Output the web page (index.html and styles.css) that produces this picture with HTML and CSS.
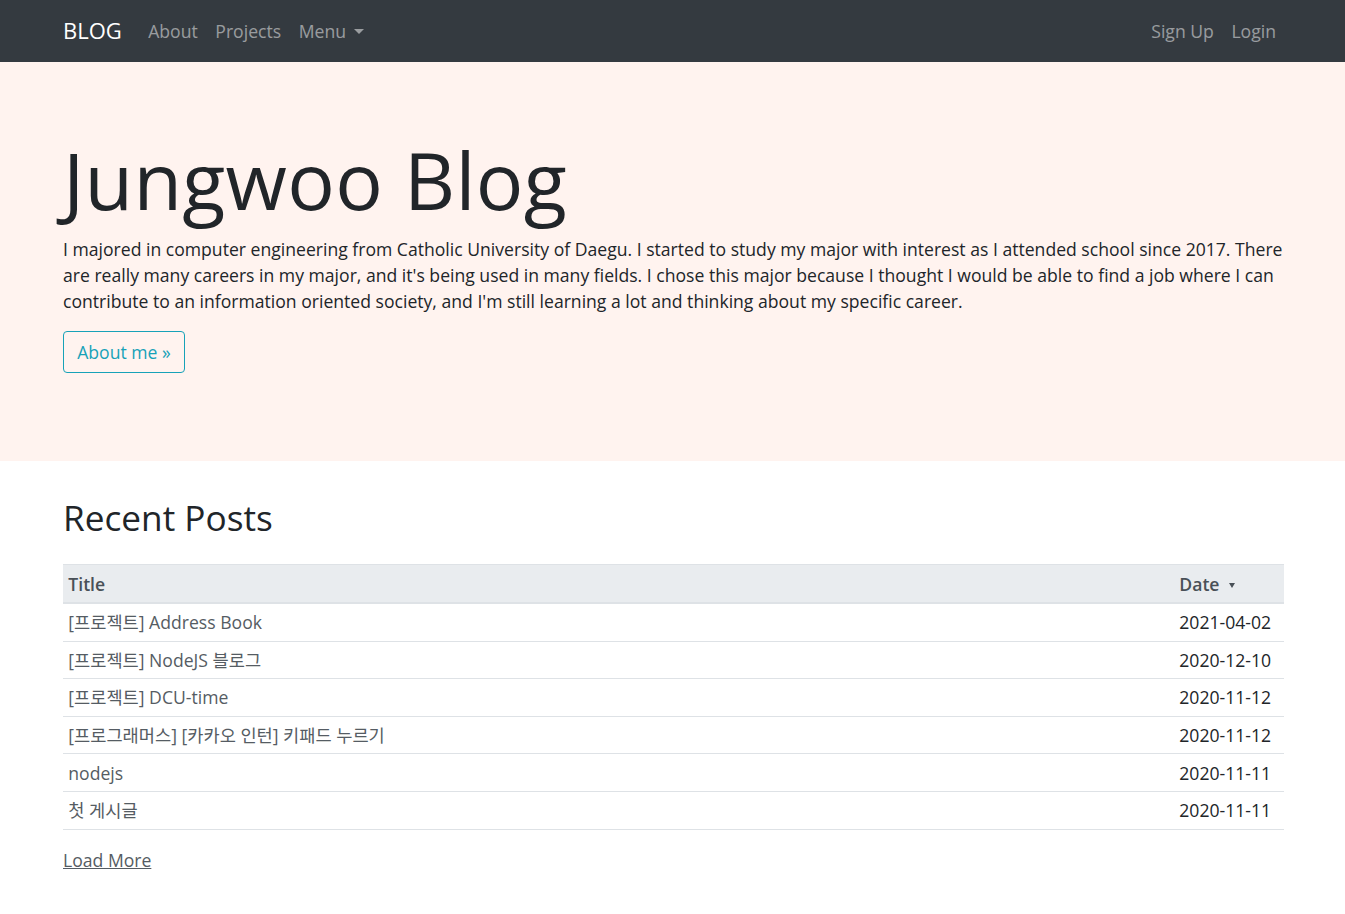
FILE: index.html
```html
<!DOCTYPE html>
<html lang="en">
<head>
<meta charset="utf-8">
<title>Jungwoo Blog</title>
<link rel="stylesheet" href="styles.css">
</head>
<body>
<nav class="navbar">
  <div class="container nav-inner">
    <div class="nav-left">
      <a class="brand" href="#">BLOG</a>
      <a class="nav-link" href="#">About</a>
      <a class="nav-link" href="#">Projects</a>
      <a class="nav-link dropdown" href="#">Menu<span class="caret"></span></a>
    </div>
    <div class="nav-right">
      <a class="nav-link" href="#">Sign Up</a>
      <a class="nav-link" href="#">Login</a>
    </div>
  </div>
</nav>
<header class="jumbotron">
  <div class="container">
    <h1 class="display">Jungwoo Blog</h1>
    <p class="lead-text">I majored in computer engineering from Catholic University of Daegu. I started to study my major with interest as I attended school since 2017. There are really many careers in my major, and it's being used in many fields. I chose this major because I thought I would be able to find a job where I can contribute to an information oriented society, and I'm still learning a lot and thinking about my specific career.</p>
    <p class="btn-row"><a class="btn-outline" href="#">About me »</a></p>
  </div>
</header>
<main class="container posts">
  <h2 class="section-title">Recent Posts</h2>
  <table class="post-table">
    <thead>
      <tr><th class="col-title">Title</th><th class="col-date">Date<span class="sort"></span></th></tr>
    </thead>
    <tbody>
      <tr><td><a href="#">[프로젝트] Address Book</a></td><td>2021-04-02</td></tr>
      <tr><td><a href="#">[프로젝트] NodeJS 블로그</a></td><td>2020-12-10</td></tr>
      <tr><td><a href="#">[프로젝트] DCU-time</a></td><td>2020-11-12</td></tr>
      <tr><td><a href="#">[프로그래머스] [카카오 인턴] 키패드 누르기</a></td><td>2020-11-12</td></tr>
      <tr><td><a href="#">nodejs</a></td><td>2020-11-11</td></tr>
      <tr><td><a href="#">첫 게시글</a></td><td>2020-11-11</td></tr>
    </tbody>
  </table>
  <a class="load-more" href="#">Load More</a>
</main>
</body>
</html>
```
FILE: styles.css
```css
* { box-sizing: border-box; }
html { font-size: 17.6px; }
body {
  margin: 0;
  font-family: "Open Sans", "Noto Sans CJK KR", sans-serif;
  font-size: 1rem;
  line-height: 1.5;
  color: #212529;
  background: #fff;
}
a { text-decoration: none; }
.container {
  max-width: 1251px;
  margin: 0 auto;
  padding: 0 14px 0 16px;
}
.navbar {
  background: #343a40;
  padding: 8.8px 0;
}
.nav-inner {
  display: flex;
  justify-content: space-between;
  align-items: center;
}
.nav-left, .nav-right { display: flex; align-items: center; }
.brand {
  color: #fff;
  font-size: 22px;
  line-height: 33px;
  padding: 5.5px 0;
  margin-right: 17.6px;
}
.nav-link {
  color: rgba(255,255,255,.5);
  padding: 8.8px 8.8px;
  line-height: 26.4px;
}
.nav-right .nav-link:last-child { padding-right: 8px; }
.caret {
  display: inline-block;
  margin-left: 8px;
  vertical-align: 4px;
  border-top: 5px solid rgba(255,255,255,.5);
  border-left: 5px solid transparent;
  border-right: 5px solid transparent;
}
.jumbotron {
  background: #fff3ef;
  padding: 70.4px 0;
  margin-bottom: 35.2px;
}
.display {
  font-size: 79.2px;
  font-weight: 400;
  line-height: 1.2;
  margin: 0 0 8.8px 0;
  letter-spacing: 0.3px;
}
.lead-text { margin: 0 0 17.6px; line-height: 26px; }
.btn-row { margin: 0 0 17.6px; }
.btn-outline {
  display: inline-block;
  color: #17a2b8;
  border: 1px solid #17a2b8;
  border-radius: 4px;
  padding: 6.6px 13.2px;
  line-height: 26.4px;
}
.section-title {
  font-size: 35.2px;
  font-weight: 400;
  line-height: 1.2;
  margin: 0 0 26px;
}
.post-table {
  width: 100%;
  border-collapse: collapse;
  margin-bottom: 17.6px;
}
.post-table th, .post-table td {
  padding: 5.3px;
  text-align: left;
  border-top: 1px solid #dee2e6;
  line-height: 26px;
}
.post-table thead th {
  background: #e9ecef;
  color: #495057;
  font-weight: 600;
  border-bottom: 2px solid #dee2e6;
}
.col-date { width: 110px; }
.sort {
  display: inline-block;
  margin-left: 9px;
  vertical-align: 3px;
  border-top: 5px solid #495057;
  border-left: 3.5px solid transparent;
  border-right: 3.5px solid transparent;
}
.post-table td a { color: #555c63; }
.post-table tbody tr:last-child td { border-bottom: 1px solid #dee2e6; }
.load-more {
  color: #555c63;
  text-decoration: underline;
}
```
